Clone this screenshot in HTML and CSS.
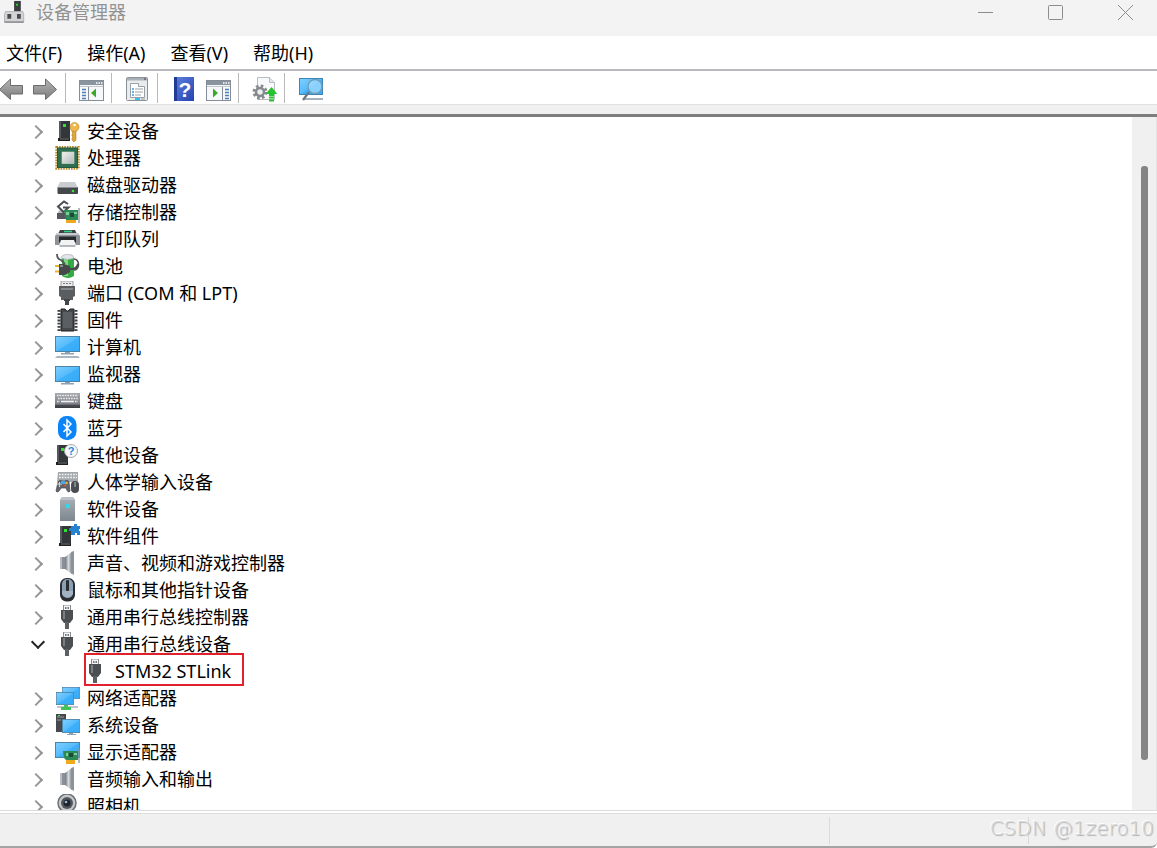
FILE: index.html
```html
<!DOCTYPE html>
<html lang="zh-CN">
<head>
    <meta charset="UTF-8">
    <meta name="viewport" content="width=device-width, initial-scale=1.0">
    <title>设备管理器</title>
    <link rel="stylesheet" href="styles.css">
</head>
<body>
    <!-- icon definitions -->
    <svg class="sprite" aria-hidden="true">
        <defs>
            <linearGradient id="screen" x1="0" y1="0" x2="1" y2="1">
                <stop offset="0" stop-color="#7fd0ff"/>
                <stop offset=".5" stop-color="#56bbfb"/>
                <stop offset=".52" stop-color="#3fb0fa"/>
                <stop offset="1" stop-color="#35a9f8"/>
            </linearGradient>
            <linearGradient id="metal" x1="0" y1="0" x2="1" y2="0">
                <stop offset="0" stop-color="#6f757b"/>
                <stop offset=".5" stop-color="#d6dade"/>
                <stop offset="1" stop-color="#7d8288"/>
            </linearGradient>
            <linearGradient id="silver" x1="0" y1="0" x2="1" y2="1">
                <stop offset="0" stop-color="#f2f2f2"/>
                <stop offset="1" stop-color="#b4b6b8"/>
            </linearGradient>
            <linearGradient id="steel" x1="0" y1="0" x2="0" y2="1">
                <stop offset="0" stop-color="#a9b0b8"/>
                <stop offset="1" stop-color="#7e868f"/>
            </linearGradient>
            <linearGradient id="keys" x1="0" y1="0" x2="0" y2="1">
                <stop offset="0" stop-color="#a7abb0"/>
                <stop offset=".75" stop-color="#7d8187"/>
                <stop offset=".8" stop-color="#4a4d52"/>
                <stop offset="1" stop-color="#3b3d41"/>
            </linearGradient>
            <linearGradient id="arrow" x1="0" y1="0" x2="0" y2="1">
                <stop offset="0" stop-color="#b5b5b5"/>
                <stop offset="1" stop-color="#7c7c7c"/>
            </linearGradient>
            <linearGradient id="book" x1="0" y1="0" x2="1" y2="1">
                <stop offset="0" stop-color="#5f80e0"/>
                <stop offset="1" stop-color="#2443b0"/>
            </linearGradient>
        </defs>

        <symbol id="i-tower" viewBox="0 0 13 22">
            <path d="M1 1h11v17H1z" fill="#33363a"/>
            <path d="M1 1h2v17H1z" fill="#55595e"/>
            <path d="M0 18h12v3H0z" fill="#1f2123"/>
            <path d="M2 19h9" stroke="#777" stroke-width="1"/>
            <path d="M5 4h3v3H5z" fill="#2fe32f"/>
        </symbol>
        <symbol id="i-security" viewBox="0 0 25 25">
            <use href="#i-tower" x="3" y="1" width="13" height="22"/>
            <path d="M17 11h4v10l-2 2-2-2v-2l1-1-1-1v-2l1-1-1-1z" fill="#dca63a" stroke="#b98424" stroke-width=".6"/>
            <circle cx="19.500" cy="8" r="4.500" fill="#edb94e" stroke="#b98424" stroke-width=".6"/>
            <circle cx="19.500" cy="6" r="1.300" fill="#fff"/>
        </symbol>
        <symbol id="i-cpu" viewBox="0 0 25 25">
            <rect x="1.500" y="1" width="22" height="21.500" fill="none" stroke="#b98a2c" stroke-width="2.400" stroke-dasharray="1.600 1"/>
            <rect x="2.500" y="2" width="20" height="19.500" fill="#2f6f50"/>
            <rect x="2.500" y="2" width="20" height="19.500" fill="none" stroke="#235a3f"/>
            <rect x="7" y="6" width="12" height="11.500" fill="url(#silver)" stroke="#cfe0d6" stroke-width=".6"/>
        </symbol>
        <symbol id="i-disk" viewBox="0 0 25 25">
            <path d="M5 9h15l3 6H2z" fill="#c9ccd0"/>
            <rect x="2.500" y="14" width="20.500" height="7" rx="1" fill="#44474b"/>
            <path d="M3 14.500h19" stroke="#8a8d91"/>
            <circle cx="18" cy="18" r="1.300" fill="#3be33b"/>
        </symbol>
        <symbol id="i-storage" viewBox="0 0 25 25">
            <path d="M3 12l2-2 6 3v5H3z" fill="#b5b8bc"/>
            <path d="M2 13h9v6H2z" fill="#55585c"/>
            <path d="M13 4L9 1.500 3 6.500l5.500 5.500 5-4.500H8" fill="none" stroke="#4b4e52" stroke-width="2"/>
            <path d="M9 10h14v10H11z" fill="#2d8a57"/>
            <path d="M11 12h3v3h-3zM19 12h3v2h-3z" fill="#7ccf9c"/>
            <rect x="15" y="13" width="4" height="4" fill="#1d4a34"/>
            <path d="M24 8v15" stroke="#8d9297" stroke-width="1.300"/>
            <path d="M11 20h10v3H11z" fill="#f0a91c"/>
        </symbol>
        <symbol id="i-printer" viewBox="0 0 25 25">
            <path d="M5 3h15l2 4H3z" fill="#3f4246"/>
            <path d="M9 4.500h8" stroke="#2fd08a" stroke-width="1.600"/>
            <path d="M2 6h21l2 3v9H0V9z" fill="#8d9399"/>
            <path d="M2 6h21l1 2H1z" fill="#c7cbd0"/>
            <path d="M4 9.500h17v6H4z" fill="#26282a"/>
            <path d="M6 13h13l2 5.500H4z" fill="#f1f3f5"/>
            <path d="M4.500 19h16" stroke="#6f757b"/>
        </symbol>
        <symbol id="i-battery" viewBox="0 0 25 25">
            <ellipse cx="19" cy="10.500" rx="4.500" ry="5.500" fill="none" stroke="#4a4d50" stroke-width="1.600"/>
            <path d="M7 3h12v19q-6 4-12 0z" fill="#35a943"/>
            <path d="M9 5h4v17H9z" fill="#7bdc7c"/>
            <path d="M6 4q0-3 7-4 6 1 6 4-6 3-13 0z" fill="#e2e5ea" stroke="#9ba1a9" stroke-width=".6"/>
            <path d="M2 0q0 5 4 6l4 4" fill="none" stroke="#55585b" stroke-width="1.800"/>
            <path d="M0 12h5M0 17.500h5" stroke="#e5b625" stroke-width="2"/>
            <path d="M4 10h5l6 2v6l-5 3H4z" fill="#46494c"/>
            <path d="M14 15h4q4-1 5-5" fill="none" stroke="#46494c" stroke-width="2"/>
            <path d="M5 11h3v2H5z" fill="#878b8f"/>
        </symbol>
        <symbol id="i-port" viewBox="0 0 25 25">
            <path d="M6 0h12v6H6z" fill="#e9ebed" stroke="#85898d" stroke-width=".8"/>
            <path d="M8 2h2v1H8zM11 2h2v1h-2zM14 2h2v1h-2z" fill="#777"/>
            <path d="M4 5h16v10l-2 1v3H6v-3l-2-1z" fill="#5b5e61"/>
            <path d="M6 7h12v2H6z" fill="#85888b"/>
            <path d="M9 18h6v2h-1v4h-4v-4H9z" fill="#44474a"/>
        </symbol>
        <symbol id="i-firmware" viewBox="0 0 25 25">
            <path d="M4 2v21M21 2v21" stroke="#3b3e41" stroke-width="3" stroke-dasharray="1.800 1.400"/>
            <path d="M6 1h4q2.500 4 5 0h4v22H6z" fill="#46494c" stroke="#1f2123"/>
            <path d="M8 4h9v16H8z" fill="#5b5e62"/>
        </symbol>
        <symbol id="i-screen" viewBox="0 0 25 16" preserveAspectRatio="none">
            <rect x=".5" y=".5" width="24" height="15" fill="url(#screen)" stroke="#4a84a8"/>
        </symbol>
        <symbol id="i-computer" viewBox="0 0 25 25">
            <use href="#i-screen" y="1" width="25" height="16"/>
            <path d="M10 17h5v1h4v1.500H6V18h4z" fill="#8ea2b3"/>
            <path d="M2 21h21l2 2H0z" fill="#a9b6c0"/>
        </symbol>
        <symbol id="i-monitor" viewBox="0 0 25 25">
            <use href="#i-screen" y="4" width="25" height="16"/>
            <path d="M10 20h5v1h4v1.500H6V21h4z" fill="#8ea2b3"/>
        </symbol>
        <symbol id="i-keyboard" viewBox="0 0 25 25">
            <rect x="0" y="4" width="25" height="15" fill="url(#keys)"/>
            <path d="M2 6.500h21M3 9.500h20M2 12.500h3M20 12.500h3" stroke="#eceef0" stroke-width="1.600" stroke-dasharray="1.600 1"/>
            <path d="M6 12.500h13" stroke="#eceef0" stroke-width="1.600"/>
        </symbol>
        <symbol id="i-bluetooth" viewBox="0 0 25 25">
            <rect x="3" y="0" width="18.500" height="24" rx="8.500" fill="#0a84f8"/>
            <path d="M8.500 8l7.500 8-4 4V4l4 4-7.500 8" fill="none" stroke="#fff" stroke-width="1.500"/>
        </symbol>
        <symbol id="i-hid" viewBox="0 0 25 25">
            <path d="M3 2h20v10H2z" fill="#a4a9ae"/>
            <path d="M4 4.500h18M4 7.500h18" stroke="#f1f2f3" stroke-width="1.600" stroke-dasharray="1.800 1"/>
            <path d="M3 12q2-3 4-1h3q3-2 4 1l1 9q-2 3-4-3H6q-3 6-5 3z" fill="#62676d" stroke="#44484c" stroke-width=".7"/>
            <path d="M2 14h5M4.500 12v5" stroke="#d5d8db"/>
            <path d="M6 11h4v3H6z" fill="#42a8f0"/>
            <circle cx="11.500" cy="13" r="1.300" fill="#f2b731"/>
            <circle cx="10" cy="15.500" r="1" fill="#e0533a"/>
            <rect x="16" y="11" width="8" height="12" rx="4" fill="#4a4e53"/>
            <path d="M20 12v5" stroke="#b9bdc1"/>
        </symbol>
        <symbol id="i-softdev" viewBox="0 0 25 25">
            <path d="M7 0h11l2 3v21H5V3z" fill="url(#steel)"/>
            <path d="M7 0h11l2 3H5z" fill="#bcc2c9"/>
            <path d="M11 7h4v4h-4z" fill="#35d6e6"/>
        </symbol>
        <symbol id="i-component" viewBox="0 0 25 25">
            <use href="#i-tower" x="4" y="1" width="13" height="22"/>
            <path d="M16 2h3V0h3v2h3v3h-1v2h1v4h-3V9h-2v2h-4V7h-2V4h2z" fill="#2583d0"/>
        </symbol>
        <symbol id="i-sound" viewBox="0 0 25 25">
            <path d="M5 6h6v12H5z" fill="#8a9097"/>
            <path d="M5 6h2v12H5z" fill="#b9bec3"/>
            <path d="M10 6l7-5v22l-7-5z" fill="url(#metal)"/>
            <path d="M16 1l3-1v24l-3-2z" fill="#8b9299"/>
        </symbol>
        <symbol id="i-mouse" viewBox="0 0 25 25">
            <rect x="5" y="0" width="15" height="23.500" rx="6.500" fill="#2a2d31"/>
            <rect x="7" y="1" width="11" height="19" rx="5" fill="#8c9fb3"/>
            <path d="M7 13h11v3q-5 7-11 0z" fill="#a3b3c4"/>
            <rect x="11" y="2" width="3" height="11" rx="1" fill="#2a2d31"/>
        </symbol>
        <symbol id="i-usb" viewBox="0 0 25 25">
            <path d="M8.500 0h7v6h-7z" fill="#f4f5f6" stroke="#8a8d90"/>
            <path d="M10 2h1.500v2H10zM12.500 2H14v2h-1.500z" fill="#777"/>
            <path d="M6 5h12v9l-3 4H9l-3-4z" fill="#4c4f52"/>
            <path d="M8 6h2v8H8z" fill="#7c7f82"/>
            <path d="M10 17h4v7h-4z" fill="#5d6063"/>
        </symbol>
        <symbol id="i-network" viewBox="0 0 25 25">
            <use href="#i-screen" x="7" y="1" width="18" height="12"/>
            <path d="M2 20h21v2H2z" fill="#c2c8cd"/>
            <use href="#i-screen" x="1" y="6" width="18" height="13"/>
            <path d="M9 19h4v2h3v3H6v-3h3z" fill="#43c25b"/>
        </symbol>
        <symbol id="i-system" viewBox="0 0 25 25">
            <path d="M1 1h10v18H1z" fill="#46494d"/>
            <path d="M2 4h7M2 7h4" stroke="#9a9da1"/>
            <path d="M3 2h2v1H3z" fill="#3be33b"/>
            <use href="#i-screen" x="7" y="6" width="18" height="14"/>
            <path d="M14 20h4v1h3v1h-9v-1h2z" fill="#8ea2b3"/>
        </symbol>
        <symbol id="i-display" viewBox="0 0 25 25">
            <use href="#i-screen" y="2" width="25" height="16"/>
            <path d="M8 11h15v9H11l-2-2z" fill="#2d8a57"/>
            <path d="M11 13h2v3h-2zM19 13h3v2h-3z" fill="#7ccf9c"/>
            <rect x="14" y="13" width="4" height="4" fill="#1d4a34"/>
            <path d="M24 8v15" stroke="#8d9297" stroke-width="1.300"/>
            <path d="M11 20h9v4h-9z" fill="#f0a91c"/>
        </symbol>
        <symbol id="i-camera" viewBox="0 0 25 25">
            <circle cx="12" cy="9" r="9" fill="#c5c8cc" stroke="#6c7075" stroke-width="1.500"/>
            <circle cx="12" cy="9" r="6" fill="#54585d"/>
            <circle cx="12" cy="9" r="3.500" fill="#20262e"/>
            <circle cx="11" cy="8" r="1.300" fill="#8fb9e0"/>
            <path d="M6 18h12l2 4H4z" fill="#8b9096"/>
        </symbol>

        <symbol id="i-app" viewBox="0 0 25 25">
            <path d="M10 1h7v11h-7z" fill="#3a3d40"/>
            <path d="M12 4h2v2h-2z" fill="#2fd02f"/>
            <path d="M1 12h18l1 3v8H0v-8z" fill="#d3d3d6" stroke="#a9a9ad" stroke-width=".8"/>
            <path d="M3 14.500h4v5H3zM13 14.500h4v5h-4z" fill="#4b4b50"/>
            <path d="M0 23h20" stroke="#8a8a8e" stroke-width="1.500"/>
        </symbol>
        <symbol id="i-arrow" viewBox="0 0 25 25">
            <path d="M.5 8.500h12V2l11 10.500-11 10V17H.5z" fill="url(#arrow)" stroke="#6b6b6b"/>
        </symbol>
        <symbol id="i-window" viewBox="0 0 25 25">
            <rect x=".5" y="3.500" width="24" height="20" fill="#f7f8fa" stroke="#868d96"/>
            <path d="M1 4h23v4H1z" fill="#8a94a1"/>
            <path d="M17 6h1.500M19.500 6H21M22 6h1.500" stroke="#fff" stroke-width="1.500"/>
            <path d="M1 9.500h23" stroke="#c3c8ce"/>
        </symbol>
        <symbol id="i-tree-pane" viewBox="0 0 25 25">
            <use href="#i-window" width="25" height="25"/>
            <path d="M9.500 10v13" stroke="#868d96"/>
            <path d="M3 12.500h4M3 15.500h4M3 18.500h4M3 21.500h4" stroke="#4c7dbb" stroke-width="1.400"/>
            <path d="M17 11.500v9l-5-4.500z" fill="#3aa927"/>
        </symbol>
        <symbol id="i-action-pane" viewBox="0 0 25 25">
            <use href="#i-window" width="25" height="25"/>
            <path d="M16.500 10v13" stroke="#868d96"/>
            <path d="M19 12.500h4M19 15.500h4M19 18.500h4M19 21.500h4" stroke="#4c7dbb" stroke-width="1.400"/>
            <path d="M7 11.500v9l5-4.500z" fill="#3aa927"/>
        </symbol>
        <symbol id="i-properties" viewBox="0 0 25 25">
            <rect x="1.500" y=".5" width="21" height="23" rx="1" fill="#e9ecef" stroke="#8b9198"/>
            <path d="M2 1h20v2.500H2z" fill="#aab0b7"/>
            <path d="M19 2h2" stroke="#40454b"/>
            <path d="M5.500 6.500h8v3h6v11h-14z" fill="#fff" stroke="#9aa0a7"/>
            <path d="M7 12h2M7 15h2M7 18h2" stroke="#3c9be0" stroke-width="1.500"/>
            <path d="M10 12h8M10 15h8M10 18h6" stroke="#9aa0a7"/>
            <path d="M10 21h5v2h-5z" fill="#2ec3f2"/>
            <path d="M16 22h4" stroke="#9aa0a7"/>
        </symbol>
        <symbol id="i-update" viewBox="0 0 25 25">
            <path d="M5.500.5h12l5 5v17h-17z" fill="#f8f9fa" stroke="#b9bcc0"/>
            <path d="M17.500.5v5h5" fill="#e3e5e8" stroke="#b9bcc0"/>
            <circle cx="8" cy="15" r="6" fill="none" stroke="#85898d" stroke-width="3" stroke-dasharray="2.500 2.212"/>
            <circle cx="8" cy="15" r="4" fill="#eee" stroke="#85898d" stroke-width="2.500"/>
            <path d="M19.500 10l6 7H22v2h-5v-2h-3.500z" fill="#27c32f"/>
            <path d="M17 20.500h5M17 23.500h5" stroke="#27c32f" stroke-width="1.800"/>
        </symbol>
        <symbol id="i-scan" viewBox="0 0 25 25">
            <rect x="1.500" y="1.500" width="23" height="16" fill="url(#screen)" stroke="#3d85b5"/>
            <path d="M6 22h19" stroke="#a3b2be" stroke-width="2"/>
            <path d="M11 15l-6 8" stroke="#6a7780" stroke-width="2.200"/>
            <circle cx="17" cy="9.500" r="7" fill="#a9defc" fill-opacity=".7" stroke="#6f9db9" stroke-width="1.300"/>
        </symbol>
    </svg>

    <header class="titlebar">
        <svg class="icon"><use href="#i-app"/></svg>
        <h1>设备管理器</h1>
        <div class="controls">
            <button type="button" aria-label="最小化"><svg viewBox="0 0 16 16"><path d="M0 8.500h15"/></svg></button>
            <button type="button" aria-label="最大化"><svg viewBox="0 0 16 16"><rect x=".5" y="1.500" width="14" height="14" rx="1"/></svg></button>
            <button type="button" aria-label="关闭"><svg viewBox="0 0 16 16"><path d="M0 1l15 15M15 1L0 16"/></svg></button>
        </div>
    </header>

    <nav class="menu">
        <button type="button">文件(F)</button>
        <button type="button">操作(A)</button>
        <button type="button">查看(V)</button>
        <button type="button">帮助(H)</button>
    </nav>

    <div class="toolbar" role="toolbar">
        <div class="group">
            <button type="button" class="back" aria-label="后退"><svg class="icon"><use href="#i-arrow"/></svg></button>
            <button type="button" aria-label="前进"><svg class="icon"><use href="#i-arrow"/></svg></button>
        </div>
        <div class="group">
            <button type="button" aria-label="显示/隐藏控制台树"><svg class="icon"><use href="#i-tree-pane"/></svg></button>
        </div>
        <div class="group">
            <button type="button" aria-label="属性"><svg class="icon"><use href="#i-properties"/></svg></button>
        </div>
        <div class="group">
            <button type="button" aria-label="帮助">
                <svg class="icon" viewBox="0 0 25 25">
                    <rect x="3" y="0" width="20" height="24" fill="url(#book)"/>
                    <path d="M3 0h3v24H3z" fill="#1f3b96"/>
                    <text x="14" y="20" text-anchor="middle" class="glyph glyph-help">?</text>
                </svg>
            </button>
            <button type="button" aria-label="显示/隐藏操作窗格"><svg class="icon"><use href="#i-action-pane"/></svg></button>
        </div>
        <div class="group">
            <button type="button" aria-label="更新驱动程序"><svg class="icon"><use href="#i-update"/></svg></button>
        </div>
        <div class="group">
            <button type="button" aria-label="扫描检测硬件改动"><svg class="icon"><use href="#i-scan"/></svg></button>
        </div>
    </div>

    <main class="content">
        <ul class="tree">
            <li><div class="row"><button type="button" class="toggle" aria-label="展开"></button><svg class="icon"><use href="#i-security"/></svg><span>安全设备</span></div></li>
            <li><div class="row"><button type="button" class="toggle" aria-label="展开"></button><svg class="icon"><use href="#i-cpu"/></svg><span>处理器</span></div></li>
            <li><div class="row"><button type="button" class="toggle" aria-label="展开"></button><svg class="icon"><use href="#i-disk"/></svg><span>磁盘驱动器</span></div></li>
            <li><div class="row"><button type="button" class="toggle" aria-label="展开"></button><svg class="icon"><use href="#i-storage"/></svg><span>存储控制器</span></div></li>
            <li><div class="row"><button type="button" class="toggle" aria-label="展开"></button><svg class="icon"><use href="#i-printer"/></svg><span>打印队列</span></div></li>
            <li><div class="row"><button type="button" class="toggle" aria-label="展开"></button><svg class="icon"><use href="#i-battery"/></svg><span>电池</span></div></li>
            <li><div class="row"><button type="button" class="toggle" aria-label="展开"></button><svg class="icon"><use href="#i-port"/></svg><span>端口 (COM 和 LPT)</span></div></li>
            <li><div class="row"><button type="button" class="toggle" aria-label="展开"></button><svg class="icon"><use href="#i-firmware"/></svg><span>固件</span></div></li>
            <li><div class="row"><button type="button" class="toggle" aria-label="展开"></button><svg class="icon"><use href="#i-computer"/></svg><span>计算机</span></div></li>
            <li><div class="row"><button type="button" class="toggle" aria-label="展开"></button><svg class="icon"><use href="#i-monitor"/></svg><span>监视器</span></div></li>
            <li><div class="row"><button type="button" class="toggle" aria-label="展开"></button><svg class="icon"><use href="#i-keyboard"/></svg><span>键盘</span></div></li>
            <li><div class="row"><button type="button" class="toggle" aria-label="展开"></button><svg class="icon"><use href="#i-bluetooth"/></svg><span>蓝牙</span></div></li>
            <li>
                <div class="row">
                    <button type="button" class="toggle" aria-label="展开"></button>
                    <svg class="icon" viewBox="0 0 25 25">
                        <use href="#i-tower" x="1" y="1" width="13" height="22"/>
                        <circle cx="16" cy="8" r="6.500" fill="#f6f8fa" stroke="#a5a9ad"/>
                        <text x="16" y="12" text-anchor="middle" class="glyph glyph-blue">?</text>
                    </svg>
                    <span>其他设备</span>
                </div>
            </li>
            <li><div class="row"><button type="button" class="toggle" aria-label="展开"></button><svg class="icon"><use href="#i-hid"/></svg><span>人体学输入设备</span></div></li>
            <li><div class="row"><button type="button" class="toggle" aria-label="展开"></button><svg class="icon"><use href="#i-softdev"/></svg><span>软件设备</span></div></li>
            <li><div class="row"><button type="button" class="toggle" aria-label="展开"></button><svg class="icon"><use href="#i-component"/></svg><span>软件组件</span></div></li>
            <li><div class="row"><button type="button" class="toggle" aria-label="展开"></button><svg class="icon"><use href="#i-sound"/></svg><span>声音、视频和游戏控制器</span></div></li>
            <li><div class="row"><button type="button" class="toggle" aria-label="展开"></button><svg class="icon"><use href="#i-mouse"/></svg><span>鼠标和其他指针设备</span></div></li>
            <li><div class="row"><button type="button" class="toggle" aria-label="展开"></button><svg class="icon"><use href="#i-usb"/></svg><span>通用串行总线控制器</span></div></li>
            <li>
                <div class="row"><button type="button" class="toggle open" aria-label="折叠" aria-expanded="true"></button><svg class="icon"><use href="#i-usb"/></svg><span>通用串行总线设备</span></div>
                <ul class="children">
                    <li><div class="row marked"><svg class="icon"><use href="#i-usb"/></svg><span>STM32 STLink</span></div></li>
                </ul>
            </li>
            <li><div class="row"><button type="button" class="toggle" aria-label="展开"></button><svg class="icon"><use href="#i-network"/></svg><span>网络适配器</span></div></li>
            <li><div class="row"><button type="button" class="toggle" aria-label="展开"></button><svg class="icon"><use href="#i-system"/></svg><span>系统设备</span></div></li>
            <li><div class="row"><button type="button" class="toggle" aria-label="展开"></button><svg class="icon"><use href="#i-display"/></svg><span>显示适配器</span></div></li>
            <li><div class="row"><button type="button" class="toggle" aria-label="展开"></button><svg class="icon"><use href="#i-sound"/></svg><span>音频输入和输出</span></div></li>
            <li><div class="row"><button type="button" class="toggle" aria-label="展开"></button><svg class="icon"><use href="#i-camera"/></svg><span>照相机</span></div></li>
        </ul>
        <div class="scrollbar"><div class="thumb"></div></div>
    </main>

    <footer class="statusbar">
        <div class="pane wide"></div>
        <div class="pane"></div>
        <div class="pane last"></div>
        <span class="watermark">CSDN @1zero10</span>
    </footer>
</body>
</html>
```

FILE: styles.css
```css
* {
    box-sizing: border-box;
}

body {
    display: flex;
    flex-direction: column;
    height: 100vh;
    margin: 0;
    overflow: hidden;
    font-family: "Noto Sans", "Noto Sans CJK SC", sans-serif;
    font-size: 18px;
    line-height: 27px;
    color: #000;
    background-color: #fff;
}

button {
    padding: 0;
    border: none;
    background: none;
    font: inherit;
    color: inherit;
}

ul {
    margin: 0;
    padding: 0;
    list-style: none;
}

.sprite {
    position: absolute;
    width: 0;
    height: 0;
}

.icon {
    display: block;
    flex: none;
    width: 25px;
    height: 25px;
}

.glyph {
    font-family: "Liberation Sans", sans-serif;
    font-weight: bold;
}

.glyph-blue {
    font-size: 11px;
    fill: #2b86d9;
}

.glyph-help {
    font-size: 21px;
    fill: #fff;
}

/* Title bar */
.titlebar {
    display: flex;
    align-items: center;
    gap: 7px;
    padding: 0 23px 12px 4px;
    background-color: #f3f3f3;
}

.titlebar h1 {
    flex: 1;
    margin: 0;
    font-size: 18px;
    font-weight: normal;
    line-height: 24px;
    color: #929292;
}

.titlebar .icon {
    height: 24px;
}

.controls {
    display: flex;
    gap: 54px;
}

.controls button {
    width: 16px;
    height: 16px;
}

.controls svg {
    display: block;
    overflow: visible;
    fill: none;
    stroke: #8c8c8c;
}

/* Menu */
.menu {
    display: flex;
    gap: 25px;
    padding: 4px 6px 2px;
    border-bottom: 2px solid #b9b9bd;
}

/* Toolbar */
.toolbar {
    display: flex;
    padding: 2px 0 1px;
    border-bottom: 1px solid #e0e0e0;
}

.group {
    display: flex;
    align-items: center;
    gap: 10px;
    height: 30px;
    padding: 2px 7px 0 13px;
    border-left: 1px solid #b9b9b9;
}

.group:first-child {
    padding-left: 0;
    border-left: none;
}

.back {
    display: flex;
    justify-content: flex-end;
    width: 23px;
    overflow: hidden;
}

.back .icon {
    transform: scaleX(-1);
}

/* Device tree */
.content {
    display: flex;
    flex: 1;
    min-height: 0;
    margin-top: 9px;
    border-top: 3px solid #7d7d7d;
    box-shadow: 0 -9px 0 #f0f0f0;
}

.tree {
    flex: 1;
    padding-top: 1px;
    overflow: hidden;
}

.row {
    display: flex;
    align-items: center;
    height: 27px;
    padding-left: 31px;
}

.row .icon {
    margin-right: 7px;
}

.toggle {
    display: flex;
    align-items: center;
    justify-content: center;
    width: 16px;
    height: 27px;
    margin-right: 8px;
}

.toggle::before {
    content: "";
    width: 8px;
    height: 8px;
    margin: 1px 6px 0 0;
    border: solid #969696;
    border-width: 2px 2px 0 0;
    transform: rotate(45deg);
}

.toggle.open::before {
    margin: 0 2px 6px 0;
    border-color: #222;
    transform: rotate(135deg);
}

.children .row {
    padding-left: 0;
}

.marked {
    position: relative;
    width: max-content;
    margin-left: 83px;
}

.marked::after {
    content: "";
    position: absolute;
    inset: -5px -13px -1px 1px;
    border: 2px solid #e0202c;
}

.scrollbar {
    width: 25px;
    padding: 49px 8px 50px 9px;
    border-right: 1px solid #e4e4e4;
    background-color: #f0f0f0;
}

.thumb {
    height: 100%;
    border-radius: 3px;
    background-color: #858585;
}

/* Status bar */
.statusbar {
    position: relative;
    display: flex;
    height: 38px;
    padding: 2px 0;
    border-top: 1px solid #dcdcdc;
    border-bottom: 2px solid #a3a3a3;
    border-bottom-right-radius: 6px;
    background-color: #f0f0f0;
    box-shadow: inset 0 2px 0 #fff, inset 0 3px 0 #dedede;
}

.pane {
    flex: none;
    width: 199px;
    margin-top: 4px;
    border-right: 1px solid #dadada;
}

.pane.wide {
    flex: 1;
}

.pane.last {
    width: 128px;
    border-right: none;
}

.watermark {
    position: absolute;
    right: 3px;
    bottom: 4px;
    font-family: "DejaVu Sans", sans-serif;
    font-size: 20px;
    font-weight: 200;
    color: #d6d6d6;
    text-shadow: 1px 1px 1px #a6a6a6, -1px -1px 0 #fff;
}
```
